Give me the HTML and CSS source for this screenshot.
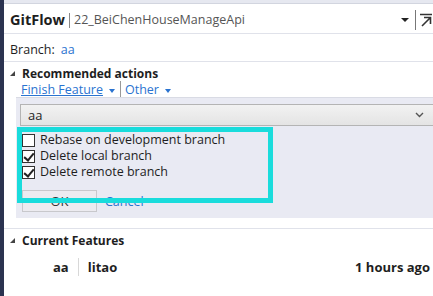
FILE: index.html
```html
<!DOCTYPE html>
<html lang="en">
<head>
    <meta charset="UTF-8">
    <title>GitFlow</title>
    <link rel="stylesheet" href="styles.css">
</head>
<body>
    <div class="window">
        <div class="top-strip"></div>

        <div class="header">
            <span class="title">GitFlow</span>
            <span class="divider"></span>
            <span class="repo">22_BeiChenHouseManageApi</span>
            <span class="spacer"></span>
            <span class="drop-arrow"></span>
            <span class="vsep"></span>
            <svg class="pin" width="12" height="14" viewBox="0 0 12 14">
                <path d="M0 1.5H12" stroke="#333" stroke-width="1.5"/>
                <path d="M2 13L10 5M4 4.5H10.5V11" stroke="#333" stroke-width="1.6" fill="none"/>
            </svg>
        </div>

        <div class="branch-row">
            Branch: <span class="link">aa</span>
        </div>

        <div class="section">
            <div class="section-title"><span class="tri"></span>Recommended actions</div>
            <div class="actions">
                <a class="action-link">Finish Feature</a><span class="small-arrow"></span>
                <span class="action-sep"></span>
                <a class="action-link plain">Other</a><span class="small-arrow"></span>
            </div>
        </div>

        <div class="panel">
            <div class="combo">
                <span>aa</span>
                <svg width="9" height="6" viewBox="0 0 9 6"><path d="M1 1L4.5 4.5L8 1" stroke="#555" stroke-width="1.4" fill="none"/></svg>
            </div>
            <div class="options">
                <label class="option"><span class="box"></span>Rebase on development branch</label>
                <label class="option"><span class="box checked"></span>Delete local branch</label>
                <label class="option"><span class="box checked"></span>Delete remote branch</label>
            </div>
            <div class="buttons">
                <button class="ok-btn">OK</button>
                <a class="cancel">Cancel</a>
            </div>
            <div class="highlight"></div>
        </div>

        <div class="section features">
            <div class="section-title"><span class="tri"></span>Current Features</div>
            <div class="feature-row">
                <span class="feat-name">aa</span>
                <span class="feat-sep"></span>
                <span class="feat-author">litao</span>
                <span class="spacer"></span>
                <span class="feat-time">1 hours ago</span>
            </div>
        </div>
    </div>
</body>
</html>
```

FILE: styles.css
```css
* {
    margin: 0;
    padding: 0;
    box-sizing: border-box;
}

body {
    width: 433px;
    height: 296px;
    overflow: hidden;
    background: #ffffff;
    font-family: 'Open Sans', 'Noto Sans', sans-serif;
    font-size: 12px;
    color: #1e1e1e;
}

.window {
    height: 296px;
    border-left: 4px solid #2b3350;
}

.top-strip {
    height: 4px;
    background: #e6e8f0;
    border-bottom: 1px solid #d2d5df;
}

.header {
    display: flex;
    align-items: center;
    height: 30px;
    padding: 2px 0 0 6px;
    border-bottom: 1px solid #e0e2ea;
}

.title {
    font-weight: 700;
    font-size: 14.5px;
    color: #1e1e1e;
}

.divider {
    width: 1px;
    height: 15px;
    background: #888;
    margin: 1px 4px 0 4px;
}

.repo {
    font-size: 12.5px;
    color: #555;
}

.spacer {
    flex: 1;
}

.drop-arrow {
    width: 0;
    height: 0;
    border-left: 4px solid transparent;
    border-right: 4px solid transparent;
    border-top: 4px solid #222;
    margin-right: 6px;
}

.vsep {
    width: 1px;
    height: 20px;
    background: #777;
    margin-right: 4px;
}

.pin {
    margin-right: 1px;
}

.branch-row {
    height: 28px;
    display: flex;
    align-items: center;
    gap: 6px;
    padding: 4px 0 0 6px;
    font-size: 12.5px;
    border-bottom: 1px solid #e0e2ea;
}

.link {
    color: #2a73d0;
}

.section {
    padding-top: 3px;
}

.section-title {
    display: flex;
    align-items: center;
    font-weight: 700;
    font-size: 12px;
    height: 17px;
}

.tri {
    width: 0;
    height: 0;
    border-left: 5px solid transparent;
    border-bottom: 5px solid #444;
    margin: 0 7px 0 6px;
}

.actions {
    display: flex;
    align-items: center;
    height: 15px;
    padding-left: 17px;
    font-size: 12.5px;
}

.action-link {
    color: #2a73d0;
    text-decoration: underline;
}

.action-link.plain {
    text-decoration: none;
}

.small-arrow {
    width: 0;
    height: 0;
    border-left: 3.5px solid transparent;
    border-right: 3.5px solid transparent;
    border-top: 4px solid #2a73d0;
    margin-left: 6px;
    margin-top: 2px;
}

.action-sep {
    width: 1px;
    height: 18px;
    background: #999;
    margin: 0 4px 0 5px;
}

.panel {
    position: relative;
    margin-left: 12px;
    background: #e9eaf3;
    border-top: 1px solid #d9dbe4;
    padding: 6px 0 6px 4px;
}

.combo {
    display: flex;
    align-items: center;
    justify-content: space-between;
    height: 22px;
    margin-right: -4px;
    padding: 0 12px 0 7px;
    border: 1px solid #b4b4b4;
    background: linear-gradient(#f2f2f2, #e4e4e4);
    font-size: 13px;
}

.options {
    display: flex;
    flex-direction: column;
    padding: 6px 0 0 2px;
}

.option {
    display: flex;
    align-items: center;
    height: 16px;
    line-height: 16px;
    font-size: 12.5px;
}

.box {
    position: relative;
    width: 13px;
    height: 13px;
    border: 1px solid #333;
    background: #ffffff;
    margin-right: 5px;
}

.box.checked::after {
    content: '';
    position: absolute;
    left: 3px;
    top: 0px;
    width: 4px;
    height: 8px;
    border-right: 2px solid #222;
    border-bottom: 2px solid #222;
    transform: rotate(40deg);
}

.buttons {
    display: flex;
    align-items: center;
    gap: 8px;
    margin-top: 10px;
    padding-left: 2px;
}

.ok-btn {
    width: 75px;
    height: 22px;
    border: 1px solid #c8c8cc;
    background: #ecebf0;
    font-family: inherit;
    font-size: 13px;
    color: #333;
}

.cancel {
    color: #2a73d0;
    font-size: 12.5px;
}

.highlight {
    position: absolute;
    left: 1px;
    top: 29px;
    width: 256px;
    height: 76px;
    border: 5px solid #19dcdc;
}

.features {
    margin-top: 10px;
    border-top: 1px solid #e0e2ea;
    padding-top: 3px;
}

.feature-row {
    display: flex;
    align-items: center;
    height: 36px;
    padding-left: 49px;
    padding-right: 3px;
    font-weight: 700;
    font-size: 13px;
}

.feat-sep {
    width: 1px;
    height: 18px;
    background: #d8d8d8;
    margin: 0 9px;
}
```
